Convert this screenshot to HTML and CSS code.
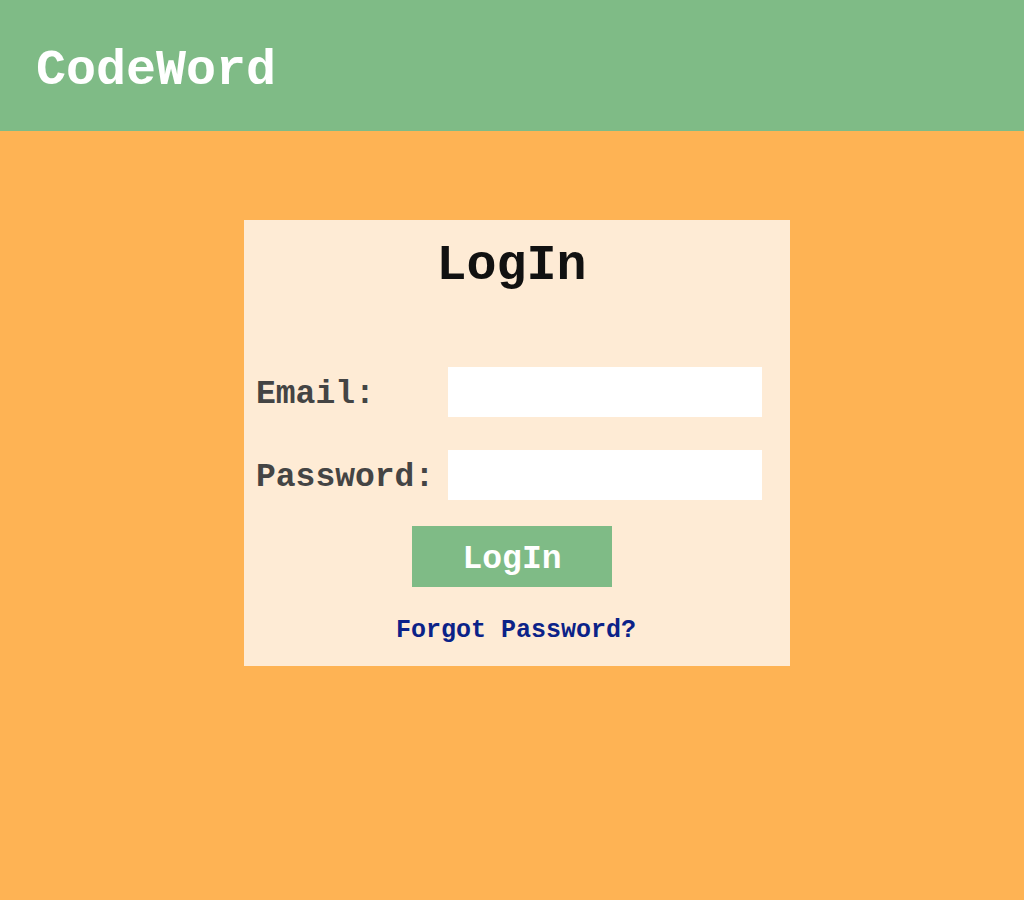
FILE: index.html
```html
<!DOCTYPE html>
<html>
<head>
<meta charset="utf-8">
<link rel="stylesheet" href="styles.css">
</head>
<body>
<header class="topbar">
  <div class="brand">CodeWord</div>
</header>
<main class="stage">
  <section class="card">
    <h1 class="card-title">LogIn</h1>
    <form class="form">
      <div class="row">
        <label class="label">Email:</label>
        <input class="field" type="text">
      </div>
      <div class="row">
        <label class="label">Password:</label>
        <input class="field" type="password">
      </div>
      <div class="actions">
        <button class="btn" type="button">LogIn</button>
      </div>
      <a class="forgot" href="#">Forgot Password?</a>
    </form>
  </section>
</main>
</body>
</html>
```
FILE: styles.css
```css
* { box-sizing: border-box; }
html, body { margin: 0; padding: 0; }
body {
  background: #feb354;
  font-family: "Liberation Mono", "Courier New", monospace;
  font-weight: bold;
  height: 900px;
}
.topbar {
  background: #7fbb86;
  height: 131px;
  display: flex;
  align-items: center;
  padding-left: 36px;
}
.brand {
  color: #ffffff;
  font-size: 50px;
  line-height: 1;
  padding-top: 10px;
}
.stage {
  display: flex;
  justify-content: center;
  padding-top: 89px;
  padding-left: 10px;
}
.card {
  width: 546px;
  height: 446px;
  background: #feebd5;
  padding: 18px 28px 0 12px;
}
.card-title {
  margin: 0;
  text-align: center;
  font-size: 50px;
  line-height: 56px;
  color: #111111;
  padding-left: 5px;
}
.form {
  display: flex;
  flex-direction: column;
  margin-top: 73px;
}
.row {
  display: grid;
  grid-template-columns: 192px 314px;
  align-items: center;
  margin-bottom: 33px;
}
.label {
  color: #444444;
  font-size: 33px;
  padding-top: 4px;
}
.field {
  width: 314px;
  height: 50px;
  border: none;
  background: #ffffff;
  margin: 0;
  outline: none;
}
.actions {
  display: flex;
  justify-content: center;
  margin-top: -7px;
  padding-left: 6px;
}
.btn {
  width: 200px;
  height: 61px;
  background: #7fbb86;
  color: #ffffff;
  border: none;
  font-family: inherit;
  font-weight: bold;
  font-size: 33px;
  padding: 6px 0 0 0;
}
.forgot {
  align-self: center;
  margin-top: 29px;
  padding-left: 14px;
  color: #0b2288;
  font-size: 25px;
  text-decoration: none;
}
```
